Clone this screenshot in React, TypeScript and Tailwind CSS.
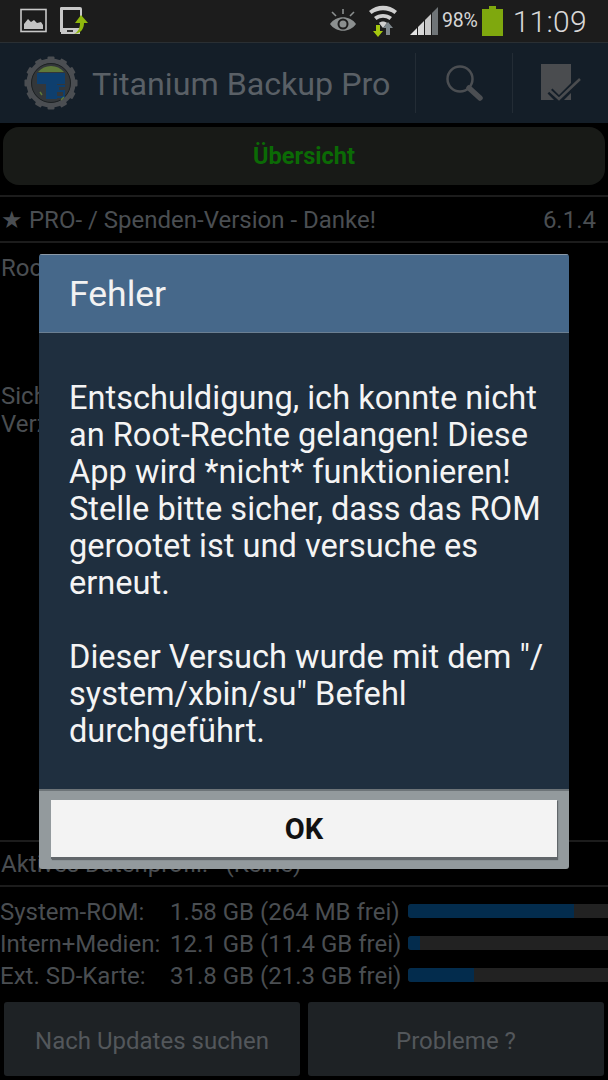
const Logo = () => (
  <svg width="54" height="54" viewBox="0 0 54 54" className="shrink-0">
    <circle cx="27" cy="27" r="22" fill="none" stroke="#4b4e52" strokeWidth="5" />
    <g fill="#4b4e52">
      {Array.from({ length: 12 }).map((_, i) => (
        <rect key={i} x="23.5" y="0.5" width="7" height="6" rx="1" transform={`rotate(${i * 30} 27 27)`} />
      ))}
    </g>
    <circle cx="27" cy="27" r="19.500" fill="#33373a" stroke="#1d2123" strokeWidth="1" />
    <path d="M14 16a17 17 0 0 1 26 0z" fill="#5f7a3a" />
    <path d="M13 17h28v11h-8v15H22V28h-9z" fill="#0e3f6e" />
    <path d="M33 29h8v2h-6v3h6v8h-8v-2h6v-4h-6z" fill="#0e3f6e" />
    <path d="M16 36l2 3M37 44l3-3" stroke="#5f7a3a" strokeWidth="1.500" />
  </svg>
);

const Status = () => (
  <div className="h-[42px] bg-[#1c1c1c] flex items-center shrink-0">
    <svg width="28" height="26" viewBox="0 0 28 26" className="ml-[20px]">
      <rect x="1" y="1.500" width="25" height="22" fill="none" stroke="#c8c8c8" strokeWidth="1.600" />
      <path d="M4 21v-5l4-5 3 3 3-2 3 3 4-1 2 3v4z" fill="#c4c4c4" />
    </svg>
    <svg width="30" height="30" viewBox="0 0 30 30" className="ml-[12px] mt-[2px]">
      <path d="M3 0h17a2 2 0 0 1 2 2v12h-2V3H3v20h13v2H0V2a2 2 0 0 1 3-2z" fill="#c8c8c8" />
      <rect x="1" y="21" width="19" height="6" fill="#c8c8c8" />
      <rect x="7" y="23" width="6" height="2" fill="#333" />
      <path d="M21 8l7 8h-4c0 6-3 10-10 11 4-2 6-6 6-11h-5z" fill="#8fb70d" />
    </svg>
    <div className="flex-1" />
    <svg width="28" height="24" viewBox="0 0 28 24">
      <path d="M1 15c6-9 20-9 26 0-6 9-20 9-26 0z" fill="#8b8f8f" />
      <circle cx="14" cy="15" r="5.500" fill="#1c1c1c" />
      <circle cx="14" cy="15" r="3.500" fill="#8b8f8f" />
      <path d="M14 0v5M3 3l4 4M25 3l-4 4" stroke="#8b8f8f" strokeWidth="1.600" />
    </svg>
    <svg width="30" height="32" viewBox="0 0 30 32" className="ml-[11px]">
      <path d="M1 6c8-7 20-7 28 0l-2.500 3c-7-5-16-5-23 0z" fill="#cfcfcf" />
      <path d="M6 12c5-4 13-4 18 0l-2.500 3c-4-3-9-3-13 0z" fill="#cfcfcf" />
      <path d="M11 18c2-2 6-2 8 0l-4 5z" fill="#cfcfcf" />
      <path d="M8 20h4v6h3l-5 6-5-6h3z" fill="#a5c80f" />
      <path d="M20 17l5 6h-3v7h-4v-7h-3z" fill="#7e878c" />
    </svg>
    <svg width="28" height="28" viewBox="0 0 28 28" className="ml-[12px]">
      <path d="M0 28l7-7v7z" fill="#e2e2e2" />
      <path d="M8 20l6-6v14H8z" fill="#d8d8d8" />
      <path d="M15 13l6-6v21h-6z" fill="#c8c8c8" />
      <path d="M22 6l6-6v28h-6z" fill="#6f7477" />
    </svg>
    <span className="ml-[4px] text-[19.5px] text-[#d6d6d6] tracking-[-0.2px]">98%</span>
    <svg width="21" height="30" viewBox="0 0 21 30" className="ml-[4px]">
      <path d="M7 0h7v3h7v27H0V3h7z" fill="#7fa80e" />
    </svg>
    <span className="ml-[10px] mr-[21px] text-[30px] text-[#d8d8d8] font-light tracking-[0.3px]">11:09</span>
  </div>
);

const ActionBar = () => (
  <div className="h-[81px] bg-[#141e28] border-t border-[#2a2f33] flex items-center shrink-0">
    <div className="ml-[24px]"><Logo /></div>
    <span className="ml-[14px] text-[32.2px] pt-[2px] text-[#5a6066] flex-1">Titanium Backup Pro</span>
    <div className="h-[60px] w-px bg-[#232c35]" />
    <div className="w-[96px] flex justify-center">
      <svg width="40" height="40" viewBox="0 0 40 40">
        <circle cx="16" cy="16" r="12.500" fill="none" stroke="#4b4e52" strokeWidth="2.500" />
        <path d="M25 25l11 10" stroke="#4b4e52" strokeWidth="5.500" strokeLinecap="round" />
      </svg>
    </div>
    <div className="h-[60px] w-px bg-[#232c35]" />
    <div className="w-[95px] flex justify-center">
      <svg width="44" height="40" viewBox="0 0 44 40">
        <rect x="2" y="1" width="30" height="36" fill="#4a4c4f" />
        <path d="M11 28l9 9 20-20" fill="none" stroke="#141e28" strokeWidth="7" />
        <path d="M9 26l11 10 21-20" fill="none" stroke="#4a4c4f" strokeWidth="2.500" />
      </svg>
    </div>
  </div>
);

const Bar = ({ pct }: { pct: number }) => (
  <div className="ml-auto w-[200px] h-[14px] bg-[#222222] rounded-l-[3px] overflow-hidden shrink-0">
    <div className="h-full bg-[#032c4d] rounded-l-[3px]" style={{ width: `${pct}%` }} />
  </div>
);

const Storage = ({ label, a, pct }: { label: string; a: string; pct: number }) => (
  <div className="h-[32px] flex items-center text-[24px] text-[#4a4e52]">
    <span className="w-[170px] shrink-0 whitespace-nowrap pt-[2px]">{label}</span>
    <span className="whitespace-nowrap pt-[2px]">{a}</span>
    <Bar pct={pct} />
  </div>
);

export default function App() {
  return (
    <div className="relative w-[608px] h-[1080px] bg-black overflow-hidden flex flex-col font-['Roboto',sans-serif]">
      <Status />
      <ActionBar />
      <div className="mt-[4px] mx-[3px] h-[58px] rounded-[16px] bg-[#181a17] flex items-center justify-center text-[23.6px] pt-[2px] font-bold text-[#0b6a05] shrink-0">
        Übersicht
      </div>
      <div className="mt-[10px] h-[48px] border-y-2 border-[#1c1c1c] flex items-center justify-between pl-[1px] pr-[12px] pt-[2px] text-[24px] text-[#4a4e52] shrink-0">
        <span>★ PRO- / Spenden-Version - Danke!</span>
        <span>6.1.4</span>
      </div>
      <div className="flex-1 pl-[1px] pt-[11px] text-[24px] text-[#4a4e52] leading-[28px] w-[39px] whitespace-nowrap">
        <div>Roo</div>
        <div className="mt-[100px]">Sich</div>
        <div>Verz</div>
      </div>
      <div className="h-[47px] border-y-2 border-[#1c1c1c] flex items-center pl-[1px] text-[24px] text-[#4a4e52] shrink-0 whitespace-pre">
        Aktives Datenprofil:   (Keine)
      </div>
      <div className="pt-[8px] shrink-0">
        <Storage label="System-ROM:" a="1.58 GB (264 MB frei)" pct={83} />
        <Storage label="Intern+Medien:" a="12.1 GB (11.4 GB frei)" pct={6} />
        <Storage label="Ext. SD-Karte:" a="31.8 GB (21.3 GB frei)" pct={33} />
      </div>
      <div className="mt-[11px] mb-[4px] px-[4px] flex gap-[8px] shrink-0">
        <div className="w-[296px] h-[74px] rounded-[3px] bg-[#1e2225] flex items-center justify-center pt-[3px] text-[24px] text-[#53575b]">Nach Updates suchen</div>
        <div className="w-[296px] h-[74px] rounded-[3px] bg-[#1e2225] flex items-center justify-center pt-[3px] text-[24px] text-[#53575b]">Probleme ?</div>
      </div>

      <div className="absolute left-[39px] top-[254px] w-[530px] h-[615px] rounded-[3px] overflow-hidden flex flex-col">
        <div className="h-[79px] bg-[#46688a] border-t border-[#8c9aa8] border-b border-b-[#6b7f92] flex items-center pl-[30px] pt-[3px] text-[35.5px] text-[#f2f2f2] shrink-0">Fehler</div>
        <div className="flex-1 bg-[#1f2f3f] pl-[30px] pr-[20px] pt-[47px] text-[32.6px] leading-[37px] text-[#f4f4f4]">
          <p>Entschuldigung, ich konnte nicht an Root-Rechte gelangen! Diese App wird *nicht* funktionieren! Stelle bitte sicher, dass das ROM gerootet ist und versuche es erneut.</p>
          <p className="mt-[37px]">Dieser Versuch wurde mit dem "/ system/xbin/su" Befehl durchgeführt.</p>
        </div>
        <div className="h-[80px] bg-[#939a9d] border-t-2 border-[#6d7478] px-[12px] pt-[9px] shrink-0">
          <div className="h-[59px] bg-[#f3f3f3] border-b-2 border-[#61666a] shadow-[1px_1px_1px_#61666a] flex items-center justify-center text-[29px] pt-[2px] font-bold text-[#111111]">OK</div>
        </div>
      </div>
    </div>
  );
}
